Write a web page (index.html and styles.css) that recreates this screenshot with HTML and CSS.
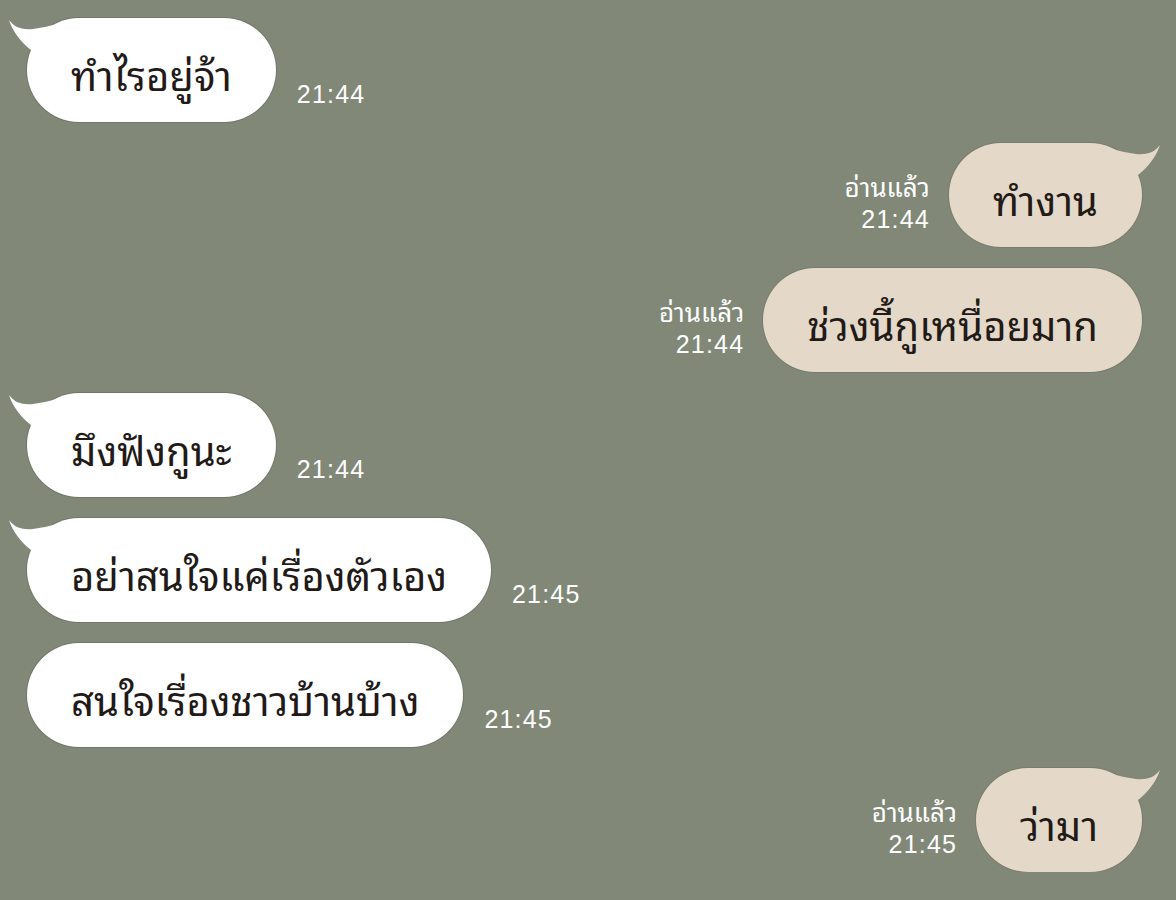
FILE: index.html
```html
<!DOCTYPE html>
<html lang="th">
	<head>
		<meta charset="utf-8">
		<meta name="viewport" content="width=device-width, initial-scale=1.0">
		<title>แชท</title>
		<link rel="stylesheet" href="styles.css">
	</head>
	<body>
		<div class="chat">
			<div class="row in">
				<div class="bubble tail"><svg class="tip" viewBox="0 0 50 40"><path d="M2 2 C8 10 16 12 26 11 C34 10 42 8 50 6 L50 40 L24 40 L24 32 C14 24 6 14 2 2 Z"/></svg>ทำไรอยู่จ้า</div>
				<div class="meta">21:44</div>
			</div>
			<div class="row out">
				<div class="meta"><span class="read">อ่านแล้ว</span><br>21:44</div>
				<div class="bubble tail"><svg class="tip" viewBox="0 0 50 40"><path d="M48 2 C42 10 34 12 24 11 C16 10 8 8 0 6 L0 40 L26 40 L26 32 C36 24 44 14 48 2 Z"/></svg>ทำงาน</div>
			</div>
			<div class="row out">
				<div class="meta"><span class="read">อ่านแล้ว</span><br>21:44</div>
				<div class="bubble">ช่วงนี้กูเหนื่อยมาก</div>
			</div>
			<div class="row in">
				<div class="bubble tail"><svg class="tip" viewBox="0 0 50 40"><path d="M2 2 C8 10 16 12 26 11 C34 10 42 8 50 6 L50 40 L24 40 L24 32 C14 24 6 14 2 2 Z"/></svg>มึงฟังกูนะ</div>
				<div class="meta">21:44</div>
			</div>
			<div class="row in">
				<div class="bubble tail"><svg class="tip" viewBox="0 0 50 40"><path d="M2 2 C8 10 16 12 26 11 C34 10 42 8 50 6 L50 40 L24 40 L24 32 C14 24 6 14 2 2 Z"/></svg>อย่าสนใจแค่เรื่องตัวเอง</div>
				<div class="meta">21:45</div>
			</div>
			<div class="row in">
				<div class="bubble">สนใจเรื่องชาวบ้านบ้าง</div>
				<div class="meta">21:45</div>
			</div>
			<div class="row out">
				<div class="meta"><span class="read">อ่านแล้ว</span><br>21:45</div>
				<div class="bubble tail"><svg class="tip" viewBox="0 0 50 40"><path d="M48 2 C42 10 34 12 24 11 C16 10 8 8 0 6 L0 40 L26 40 L26 32 C36 24 44 14 48 2 Z"/></svg>ว่ามา</div>
			</div>
		</div>
	</body>
</html>
```

FILE: styles.css
```css
body { margin: 0; background: #818877; font-family: "Noto Sans Thai Looped", "Loma", "Garuda", "Waree", "Noto Sans Thai", "Liberation Sans", sans-serif; }
.chat { display: flex; flex-direction: column; gap: 21px; padding: 18px 34px 0 27px; }
.row { display: flex; align-items: flex-end; }
.row.out { justify-content: flex-end; }
.bubble { position: relative; box-sizing: border-box; height: 104px; display: flex; align-items: center; padding: 6px 44px 0; border-radius: 52px; font-size: 40px; color: #221a17; white-space: nowrap; }
.in .bubble { background: #fff; box-shadow: 0 0 0 1px rgba(0,0,0,0.12); }
.out .bubble { background: #e4d8c8; box-shadow: 0 0 0 1px rgba(90,70,50,0.18); }
.tip { position: absolute; top: 0; width: 50px; height: 40px; }
.in .tip { left: -20px; fill: #fff; }
.out .tip { right: -20px; fill: #e4d8c8; }
.meta { color: #fff; font-family: "Liberation Sans", "DejaVu Sans", sans-serif; font-size: 25px; letter-spacing: 1.2px; line-height: 31px; padding-bottom: 12px; }
.in .meta { margin-left: 21px; }
.out .meta { margin-right: 19px; text-align: right; }
.read { font-family: "Noto Sans Thai Looped", "Loma", "Garuda", "Noto Sans Thai", sans-serif; font-size: 26px; letter-spacing: 0; }
```
